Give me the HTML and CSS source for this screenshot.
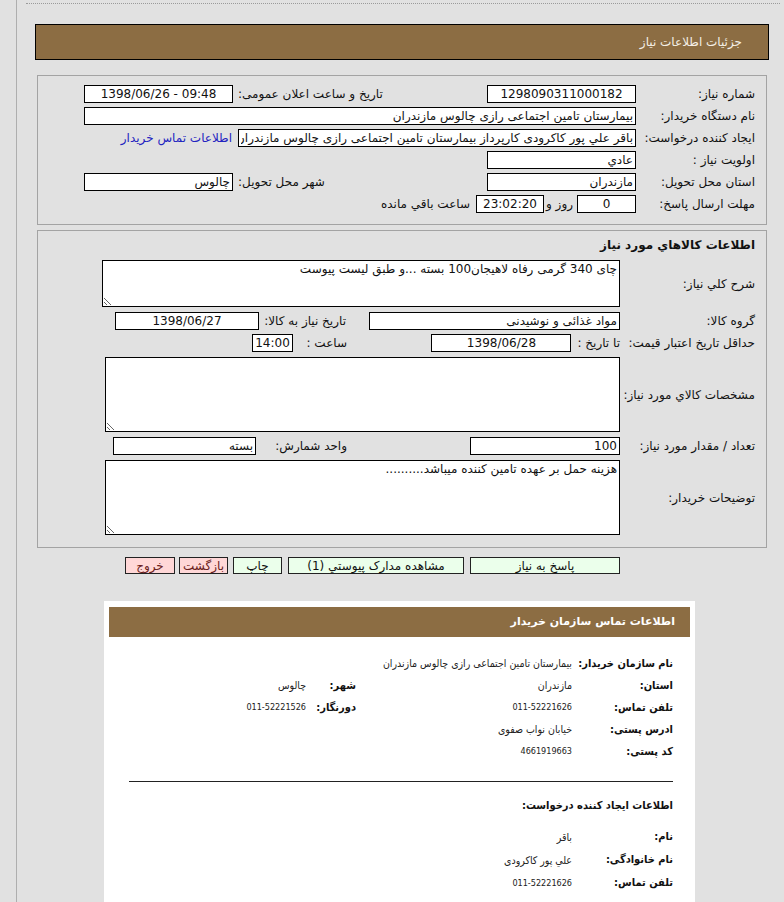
FILE: index.html
```html
<!DOCTYPE html>
<html lang="fa" dir="rtl">
<head>
<meta charset="utf-8">
<title>جزئیات اطلاعات نیاز</title>
<link rel="stylesheet" href="styles.css">
</head>
<body>
<div class="frame">
  <div class="topline"></div>
  <div class="pagehead">جزئیات اطلاعات نیاز</div>

  <div class="box box1">
    <div class="row">
      <div class="lbl">شماره نیاز:</div>
      <input class="fld w149 center" value="1298090311000182" readonly>
      <div class="lbl2">تاریخ و ساعت اعلان عمومی:</div>
      <input class="fld w149 center ltr" dir="ltr" value="1398/06/26 - 09:48" readonly>
    </div>
    <div class="row">
      <div class="lbl">نام دستگاه خریدار:</div>
      <input class="fld w552" value="بیمارستان تامین اجتماعی رازی چالوس مازندران" readonly>
    </div>
    <div class="row">
      <div class="lbl">ایجاد کننده درخواست:</div>
      <input class="fld w398" value="باقر علي پور کاکرودی کارپرداز بیمارستان تامین اجتماعی رازی چالوس مازندران" readonly>
      <a class="contact-link" href="#contact">اطلاعات تماس خریدار</a>
    </div>
    <div class="row">
      <div class="lbl">اولویت نیاز :</div>
      <input class="fld w149" value="عادي" readonly>
    </div>
    <div class="row">
      <div class="lbl">استان محل تحویل:</div>
      <input class="fld w149" value="مازندران" readonly>
      <div class="lbl2">شهر محل تحویل:</div>
      <input class="fld w149" value="چالوس" readonly>
    </div>
    <div class="row">
      <div class="lbl">مهلت ارسال پاسخ:</div>
      <input class="fld w59 center" value="0" readonly>
      <span class="txt days">روز و</span>
      <input class="fld w68 center" value="23:02:20" readonly>
      <span class="txt remain">ساعت باقي مانده</span>
    </div>
  </div>

  <div class="box box2">
    <div class="title">اطلاعات کالاهاي مورد نیاز</div>
    <div class="trow">
      <div class="lbl lbl-wide">شرح کلي نیاز:</div>
      <textarea class="area area-s" readonly>چای 340 گرمی رفاه لاهیجان100 بسته ...و طبق لیست پیوست</textarea>
    </div>
    <div class="row r1">
      <div class="lbl lbl-wide">گروه کالا:</div>
      <input class="fld w251" value="مواد غذائی و نوشیدنی" readonly>
      <div class="lbl3 c110">تاریخ نیاز به کالا:</div>
      <input class="fld w144 center" value="1398/06/27" readonly>
    </div>
    <div class="row">
      <div class="lbl lbl-wide">حداقل تاریخ اعتبار قیمت:</div>
      <div class="sub">
        <span class="txt">تا تاریخ :</span>
        <input class="fld w140 center" value="1398/06/28" readonly>
      </div>
      <div class="lbl3 c77">ساعت :</div>
      <input class="fld w41 center" value="14:00" readonly>
    </div>
    <div class="trow gap3">
      <div class="lbl lbl-wide">مشخصات کالاي مورد نیاز:</div>
      <textarea class="area area-l w515" readonly></textarea>
    </div>
    <div class="row r1">
      <div class="lbl lbl-wide">تعداد / مقدار مورد نیاز:</div>
      <div class="sub">
        <input class="fld w150" value="100" readonly>
      </div>
      <div class="lbl3 c114">واحد شمارش:</div>
      <input class="fld w143" value="بسته" readonly>
    </div>
    <div class="trow gap3">
      <div class="lbl lbl-wide">توضیحات خریدار:</div>
      <textarea class="area area-l w515" readonly>هزینه حمل بر عهده تامین کننده میباشد..........</textarea>
    </div>
  </div>

  <div class="buttons">
    <button class="btn green b150">پاسخ به نیاز</button>
    <button class="btn green b176">مشاهده مدارک پیوستي (1)</button>
    <button class="btn green b49 g5">چاپ</button>
    <button class="btn pink b49 g4">بازگشت</button>
    <button class="btn pink b50">خروج</button>
  </div>

  <div class="contact" id="contact">
    <div class="chead">اطلاعات تماس سازمان خریدار</div>
    <div class="cgrid">
      <div class="cl">نام سازمان خریدار:</div>
      <div class="cv span3">بیمارستان تامین اجتماعی رازی چالوس مازندران</div>
      <div class="cl">استان:</div>
      <div class="cv">مازندران</div>
      <div class="cl">شهر:</div>
      <div class="cv">چالوس</div>
      <div class="cl">تلفن تماس:</div>
      <div class="cv num">011-52221626</div>
      <div class="cl">دورنگار:</div>
      <div class="cv num">011-52221526</div>
      <div class="cl">ادرس پستی:</div>
      <div class="cv span3">خیابان نواب صفوی</div>
      <div class="cl">کد پستی:</div>
      <div class="cv num span3">4661919663</div>
    </div>
    <div class="sep"></div>
    <div class="ctitle">اطلاعات ایجاد کننده درخواست:</div>
    <div class="cgrid cgrid2">
      <div class="cl">نام:</div>
      <div class="cv span3">باقر</div>
      <div class="cl">نام خانوادگی:</div>
      <div class="cv span3">علي پور کاکرودی</div>
      <div class="cl">تلفن تماس:</div>
      <div class="cv num span3">011-52221626</div>
    </div>
  </div>
</div>
</body>
</html>
```

FILE: styles.css
```css
* { box-sizing: border-box; }

html, body {
  margin: 0;
  padding: 0;
  background: #e1e1e1;
}

body {
  font-family: "DejaVu Sans", "Noto Sans", sans-serif;
  font-size: 12px;
  color: #111;
  direction: rtl;
}

.frame {
  margin-left: 16px;
  border-left: 1px solid #aeaeae;
  min-height: 960px;
  padding-top: 3px;
}

.topline {
  border-top: 1px dotted #9a9a9a;
  margin: 0 4px 0 9px;
  height: 0;
}

.pagehead {
  width: 734px;
  height: 36px;
  margin: 20px 15px 0 0;
  background: #8c6d43;
  border: 1px solid #000;
  color: #f4efe6;
  font-size: 12px;
  line-height: 34px;
  padding-right: 26px;
}

.box {
  width: 730px;
  margin-right: 17px;
  border: 1px solid #a3a3a3;
  padding-right: 11px;
}

.box1 {
  margin-top: 15px;
  padding-top: 7px;
  padding-bottom: 9px;
}

.box2 {
  margin-top: 5px;
  padding-top: 4px;
  padding-bottom: 12px;
}

.row {
  display: flex;
  align-items: center;
  height: 22px;
}

.lbl {
  width: 119px;
  flex: none;
  white-space: nowrap;
  text-align: right;
}

.lbl-wide { width: 135px; }

.lbl2 {
  width: 254px;
  flex: none;
  white-space: nowrap;
  text-align: left;
  padding-left: 5px;
}

.lbl3 {
  flex: none;
  white-space: nowrap;
  text-align: right;
  padding-right: 23px;
}
.c110 { width: 110px; }
.c77 { width: 77px; }
.c114 { width: 114px; }

.fld {
  flex: none;
  height: 18px;
  border: 1px solid #000;
  background: #fff;
  font-family: "DejaVu Sans", sans-serif;
  font-size: 12px;
  color: #111;
  padding: 0 2px;
  margin: 0;
  direction: rtl;
  text-align: right;
  outline: none;
}
.center { text-align: center; }
.ltr { direction: ltr; }

.w41 { width: 41px; }
.w59 { width: 59px; }
.w68 { width: 68px; }
.w140 { width: 140px; }
.w143 { width: 143px; }
.w144 { width: 144px; }
.w149 { width: 149px; }
.w150 { width: 150px; }
.w251 { width: 251px; }
.w398 { width: 398px; }
.w552 { width: 552px; }

.contact-link {
  color: #2323c0;
  text-decoration: none;
  margin-right: 6px;
  white-space: nowrap;
}

.txt { white-space: nowrap; flex: none; }
.days { margin: 0 4px 0 2px; }
.remain { margin-right: 6px; }

.sub {
  width: 250px;
  flex: none;
  display: flex;
  align-items: center;
}
.sub .txt { margin-left: 6px; }

.title {
  height: 20px;
  line-height: 20px;
  font-weight: bold;
  font-size: 12px;
}

.trow {
  display: flex;
  align-items: center;
  margin-top: 5px;
}
.gap3 { margin-top: 3px; }
.r1 { margin-top: 3px; }

.area {
  flex: none;
  width: 518px;
  border: 1px solid #000;
  background: #fff;
  font-family: "DejaVu Sans", sans-serif;
  font-size: 12px;
  color: #111;
  padding: 1px 2px;
  margin: 0;
  direction: rtl;
  text-align: right;
  outline: none;
  overflow: hidden;
}
.area-s { height: 47px; }
.area-l { height: 75px; }
.w515 { width: 515px; }

.buttons {
  display: flex;
  margin-top: 9px;
  padding-right: 164px;
  height: 17px;
}

.btn {
  flex: none;
  height: 17px;
  border: 1px solid #222;
  font-family: "DejaVu Sans", sans-serif;
  font-size: 12px;
  line-height: 14px;
  padding: 0;
  margin: 0 0 0 6px;
  color: #111;
  white-space: nowrap;
}
.green { background: #ebffeb; }
.pink { background: #ffd7d7; color: #6a2020; }
.g5 { margin-left: 5px; }
.g4 { margin-left: 4px; }
.b150 { width: 150px; }
.b176 { width: 176px; }
.b49 { width: 49px; }
.b50 { width: 50px; }

.contact {
  width: 591px;
  margin: 27px 89px 0 0;
  background: #fff;
  padding: 6px 5px 40px;
}

.chead {
  height: 30px;
  line-height: 30px;
  background: #8c6d43;
  color: #fff;
  font-weight: bold;
  font-size: 11px;
  padding-right: 15px;
}

.cgrid {
  display: grid;
  grid-template-columns: 101px 216px 50px 1fr;
  grid-auto-rows: 22px;
  align-items: center;
  margin-top: 15px;
  padding-right: 17px;
}

.cgrid2 {
  grid-auto-rows: 23px;
  margin-top: 8px;
}

.cl {
  font-family: "DejaVu Sans Condensed", "DejaVu Sans", sans-serif;
  font-weight: bold;
  font-size: 11px;
  white-space: nowrap;
}

.cv {
  font-family: "DejaVu Sans Condensed", "DejaVu Sans", sans-serif;
  font-size: 10.5px;
  white-space: nowrap;
  color: #222;
}

.num { font-size: 9px; }

.span3 { grid-column: span 3; }

.sep {
  height: 1px;
  background: #222;
  margin: 19px 17px 0 20px;
}

.ctitle {
  font-family: "DejaVu Sans Condensed", "DejaVu Sans", sans-serif;
  height: 22px;
  line-height: 22px;
  margin-top: 13px;
  padding-right: 17px;
  font-weight: bold;
  font-size: 11px;
}
```
